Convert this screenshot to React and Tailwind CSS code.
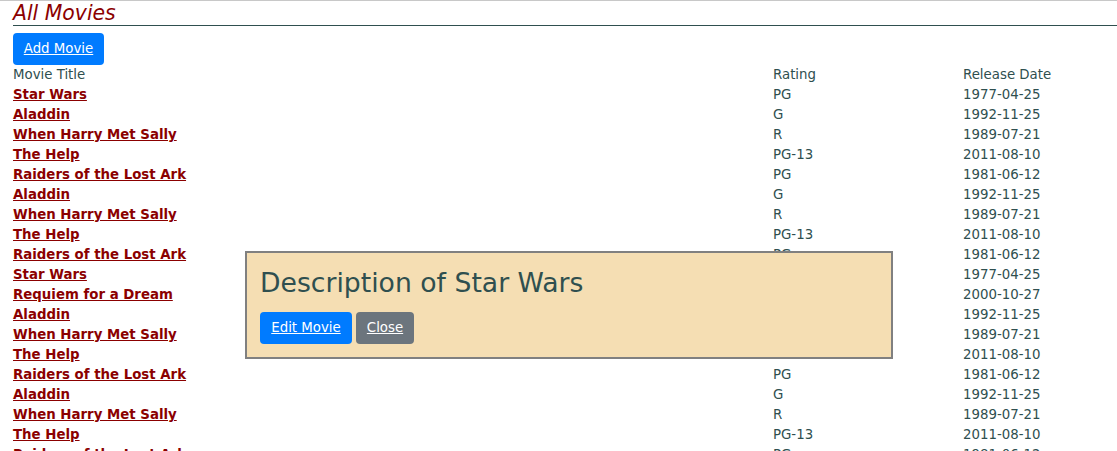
const movies = [
  ["Star Wars", "PG", "1977-04-25"],
  ["Aladdin", "G", "1992-11-25"],
  ["When Harry Met Sally", "R", "1989-07-21"],
  ["The Help", "PG-13", "2011-08-10"],
  ["Raiders of the Lost Ark", "PG", "1981-06-12"],
  ["Aladdin", "G", "1992-11-25"],
  ["When Harry Met Sally", "R", "1989-07-21"],
  ["The Help", "PG-13", "2011-08-10"],
  ["Raiders of the Lost Ark", "PG", "1981-06-12"],
  ["Star Wars", "PG", "1977-04-25"],
  ["Requiem for a Dream", "R", "2000-10-27"],
  ["Aladdin", "G", "1992-11-25"],
  ["When Harry Met Sally", "R", "1989-07-21"],
  ["The Help", "PG-13", "2011-08-10"],
  ["Raiders of the Lost Ark", "PG", "1981-06-12"],
  ["Aladdin", "G", "1992-11-25"],
  ["When Harry Met Sally", "R", "1989-07-21"],
  ["The Help", "PG-13", "2011-08-10"],
  ["Raiders of the Lost Ark", "PG", "1981-06-12"],
];

function MovieRow({ title, rating, date }) {
  return (
    <div className="grid grid-cols-[760px_190px_1fr] leading-[20px]">
      <a href="#" className="font-bold text-[#8b0000] underline">{title}</a>
      <span>{rating}</span>
      <span>{date}</span>
    </div>
  );
}

function DescriptionModal() {
  return (
    <div className="absolute left-[245px] top-[250px] w-[648px] h-[108px] border-2 border-[#808080] bg-[#f5deb3] px-[13px]">
      <h2 className="mt-[14px] text-[26.67px] leading-[32px] text-[#2f4f4f]">Description of Star Wars</h2>
      <div className="mt-[13px] flex gap-[4px]">
        <button className="h-[32px] w-[92px] rounded-[4px] bg-[#007bff] text-white underline">Edit Movie</button>
        <button className="h-[32px] w-[58px] rounded-[4px] bg-[#6c757d] text-white underline">Close</button>
      </div>
    </div>
  );
}

export default function App() {
  return (
    <div className="relative h-[451px] overflow-hidden border-t border-[#c8c8c8] bg-white text-[13.33px] text-[#2f4f4f] [font-family:'DejaVu_Sans',sans-serif]">
      <h1 className="ml-[13px] border-b border-[#2f4f4f] text-[20.4px] italic leading-[24px] text-[#8b0000]">All Movies</h1>
      <div className="px-[13px]">
        <button className="mt-[7px] h-[32px] w-[91px] rounded-[4px] bg-[#007bff] text-white underline">Add Movie</button>
        <div className="grid grid-cols-[760px_190px_1fr] leading-[20px]">
          <span>Movie Title</span>
          <span>Rating</span>
          <span>Release Date</span>
        </div>
        {movies.map(([title, rating, date], i) => (
          <MovieRow key={i} title={title} rating={rating} date={date} />
        ))}
      </div>
      <DescriptionModal />
    </div>
  );
}
